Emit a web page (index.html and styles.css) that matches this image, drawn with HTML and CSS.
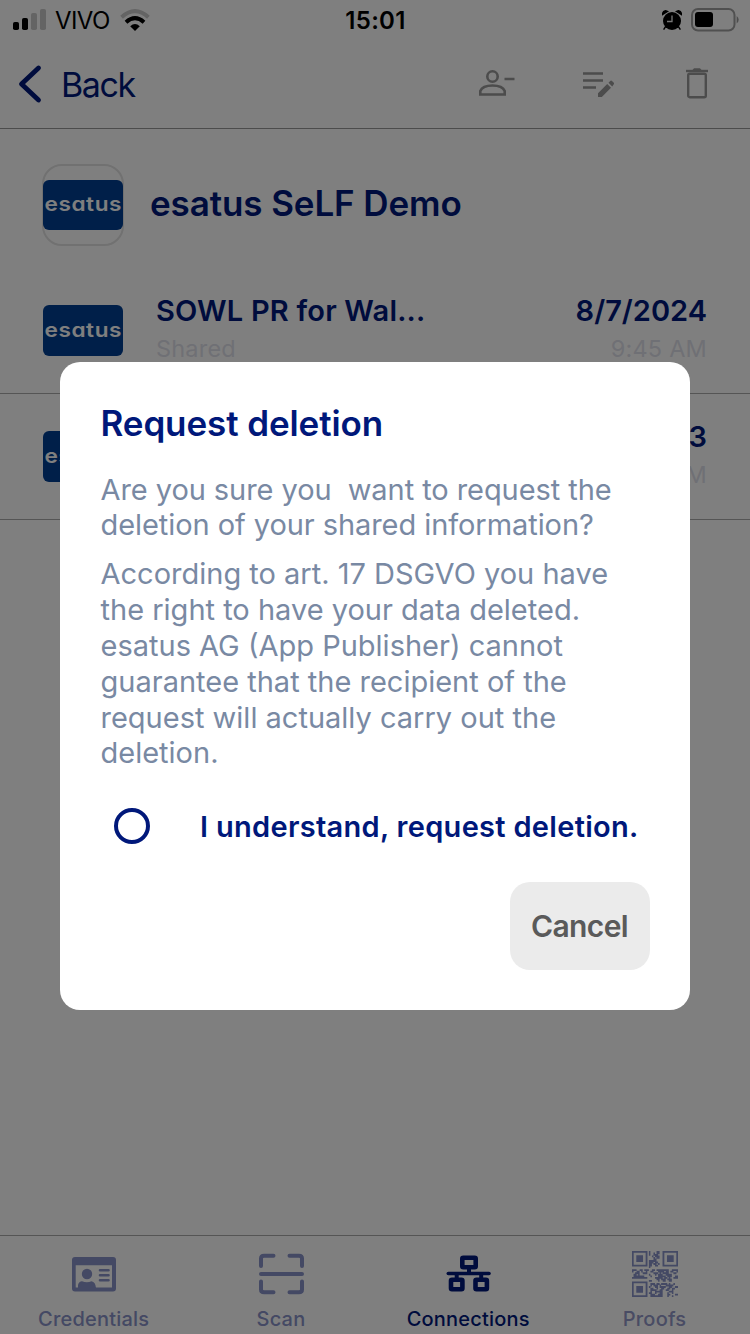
FILE: index.html
```html
<!DOCTYPE html>
<html lang="en">
<head>
<meta charset="utf-8">
<title>esatus Wallet</title>
<link rel="stylesheet" href="styles.css">
</head>
<body>
<div class="screen">
  <header class="status">
    <div class="status-left">
      <svg class="signal" width="34" height="22" viewBox="0 0 34 22"><rect x="0" y="13" width="6" height="8" rx="1.8"/><rect x="9" y="9" width="6" height="12" rx="1.8"/><g fill="#c8c8c8"><rect x="18" y="4" width="6" height="17" rx="1.8"/><rect x="27" y="0" width="6" height="21" rx="1.8"/></g></svg>
      <span class="carrier">VIVO</span>
      <svg class="wifi" width="30" height="22" viewBox="0 0 30 22" fill="none" stroke-width="4"><path d="M1.6 8.2Q15-4 28.400 8.200" stroke="#c8c8c8"/><path d="M6 13.200Q15 5.200 24 13.200" stroke="#000"/><path d="M10.200 17.300Q15 12.800 19.800 17.300L15 22Z" fill="#000"/></svg>
    </div>
    <span class="clock">15:01</span>
    <div class="status-right">
      <svg width="20" height="21" viewBox="0 0 20 21"><circle cx="10" cy="11" r="9"/><path d="M0.600 4.500Q.5 1 3.500.7L5.500 1.500ZM19.400 4.500Q19.500 1 16.500.7L14.500 1.500ZM4 16L1.600 19.700M16 16L18.400 19.700" stroke="#000" stroke-width="1.400"/><path d="M10 5.500V11.500H5" fill="none" stroke="#eee" stroke-width="1.300"/></svg>
      <svg width="48" height="24" viewBox="0 0 48 24"><rect x="1" y="1" width="42.500" height="21.500" rx="6" fill="none" stroke="#a0a0a0" stroke-width="2"/><rect x="4" y="4" width="18" height="15" rx="3"/><path d="M45.700 8Q49.700 11.500 45.700 15.500Z" fill="#999"/></svg>
    </div>
  </header>

  <nav class="nav">
    <svg width="24" height="40" viewBox="0 0 24 40" fill="none" stroke="#00187a" stroke-width="4.800" stroke-linecap="round" stroke-linejoin="round"><path d="M20.500 4L3.500 20L20.500 36"/></svg>
    <span class="back">Back</span>
    <div class="tools">
      <svg width="38" height="30" viewBox="0 0 38 30" fill="none" stroke="#989898" stroke-width="2.600"><circle cx="14.500" cy="8.500" r="5.200"/><path d="M2.300 26.500V23Q4.500 17.500 14.500 17.500T26.700 23V26.500ZM26.500 11H36.500"/></svg>
      <svg width="34" height="30" viewBox="0 0 34 30" fill="none" stroke="#989898" stroke-width="2.600"><path d="M1 5.500H21M1 12.500H21M1 19.500H14"/><path d="M16 29V25.200L25.200 16L29 19.800L19.800 29ZM26.500 14.700L28.500 12.800Q29.200 12.200 30 12.900L31.800 14.800Q32.400 15.600 31.800 16.300L30.200 18.500Z" fill="#989898" stroke="none"/></svg>
      <svg class="trash" width="24" height="32" viewBox="0 0 24 32" fill="none" stroke="#989898" stroke-width="2.400"><rect x="3.200" y="6.700" width="17.600" height="23.500" rx="1.500"/><path d="M1 4H23"/><path d="M7.500 3L9 1.200H15L16.500 3Z" fill="#989898" stroke="none"/></svg>
    </div>
  </nav>

  <section class="profile">
    <div class="avatar"><div class="logo"><span>esatus</span></div></div>
    <h1>esatus SeLF Demo</h1>
  </section>

  <main class="list">
    <article class="row">
      <div class="logo"><span>esatus</span></div>
      <div class="info"><b>SOWL PR for Wal...</b><small>Shared</small></div>
      <div class="date"><b>8/7/2024</b><small>9:45 AM</small></div>
    </article>
    <article class="row">
      <div class="logo"><span>esatus</span></div>
      <div class="info"></div>
      <div class="date"><b>3</b><small>M</small></div>
    </article>
  </main>

  <footer class="tabs">
    <div class="tab">
      <svg width="46" height="48" viewBox="0 0 46 48" fill="#8892c8"><path fill-rule="evenodd" d="M4 7H42Q45 7 45 10V38.500Q45 41.500 42 41.500H4Q1 41.500 1 38.500V10Q1 7 4 7ZM4.700 15.200V37.500H41V15.200Z"/><circle cx="16" cy="24" r="5.200"/><path d="M7 38V35Q8 31.300 11 31.300Q16 33 20.500 31.300Q24.500 32 25 38Z"/><path d="M29 20.200H37.500M29 25.200H37.500M29 30.300H37.500" stroke="#8892c8" stroke-width="2.600" stroke-linecap="round"/></svg>
      <span>Credentials</span>
    </div>
    <div class="tab">
      <svg width="46" height="48" viewBox="0 0 46 48" fill="none" stroke="#8892c8" stroke-width="4" stroke-linecap="round"><path d="M3 16V8.500Q3 5.700 6 5.700H15.500M31.500 5.700H41Q44 5.700 44 8.500V16M3 31.500V39.500Q3 42.300 6 42.300H15.500M31.500 42.300H41Q44 42.300 44 39.500V31.500M3 24H44"/></svg>
      <span>Scan</span>
    </div>
    <div class="tab active">
      <svg width="46" height="48" viewBox="0 0 46 48" fill="none" stroke="#00187a" stroke-width="4.600"><rect x="17.300" y="7.800" width="13.400" height="9.400" rx="1"/><rect x="6" y="29.800" width="11.400" height="9.400" rx="1"/><rect x="30.500" y="29.800" width="11.400" height="9.400" rx="1"/><path d="M24 19V23M11.700 24V28M36.200 24V28" stroke-width="4"/><path d="M3.300 23.500H44" stroke-width="3.600" stroke-linecap="round"/></svg>
      <span>Connections</span>
    </div>
    <div class="tab proofs">
      <svg width="46" height="46" viewBox="0 0 30 30" fill="none" stroke="#8892c8" stroke-width="1.200"><path d="M.5.500H9.500V9.500H.5ZM20.500.500H29.500V9.500H20.500ZM.5 20.500H9.500V29.500H.5Z"/><path d="M2.800 2.800H7.200V7.200H2.800ZM22.800 2.800H27.200V7.200H22.800ZM2.800 22.800H7.200V27.200H2.800Z" fill="#8892c8" stroke="none"/><path d="M11 .5h1M16 .5h2M11 1.500h1M14 1.500h1M16 1.500h2M11 2.500h1M14 2.500h3M13 3.500h1M15 3.500h3M14 4.500h1M16 4.500h2M14 5.500h2M11 6.500h5M11 7.500h3M15 7.500h2M11 8.500h2M14 8.500h2M17 8.500h1M11 9.500h2M15 9.500h2M11 10.500h1M0 12.500h3M5 12.500h2M8 12.500h3M13 12.500h2M16 12.500h8M26 12.500h4M0 13.500h1M3 13.500h2M6 13.500h1M9 13.500h1M12 13.500h2M17 13.500h4M22 13.500h2M25 13.500h2M29 13.500h1M2 14.500h3M7 14.500h3M14 14.500h3M18 14.500h1M20 14.500h4M27 14.500h2M1 15.500h2M4 15.500h1M11 15.500h1M15 15.500h1M17 15.500h3M22 15.500h4M1 16.500h7M12 16.500h1M17 16.500h5M23 16.500h3M28 16.500h2M0 17.500h10M15 17.500h5M21 17.500h2M24 17.500h1M27 17.500h3M16 18.500h2M19 18.500h3M23 18.500h3M11 19.500h2M17 19.500h1M20 19.500h2M24 19.500h2M12 21.500h3M16 21.500h2M19 21.500h4M24 21.500h1M27 21.500h1M12 22.500h1M14 22.500h3M18 22.500h1M22 22.500h5M11 23.500h1M15 23.500h2M18 23.500h4M24 23.500h2M28 23.500h2M12 24.500h2M16 24.500h1M19 24.500h2M23 24.500h2M26 24.500h2M12 25.500h4M18 25.500h2M22 25.500h2M26 25.500h1M12 26.500h1M15 26.500h5M24 26.500h3M11 27.500h2M15 27.500h1M18 27.500h2M23 27.500h1M26 27.500h1M12 28.500h3M17 28.500h3M23 28.500h2M28 28.500h2M12 29.500h8M23 29.500h1M26 29.500h1"/></svg>
      <span>Proofs</span>
    </div>
  </footer>

  <div class="overlay">
    <div class="dialog" role="dialog">
      <h2>Request deletion</h2>
      <p class="question">Are you sure you  want to request the
deletion of your shared information?</p>
      <p class="legal">According to art. 17 DSGVO you have
the right to have your data deleted.
esatus AG (App Publisher) cannot
guarantee that the recipient of the
request will actually carry out the
deletion.</p>
      <label class="option"><i class="radio"></i><span>I understand, request deletion.</span></label>
      <button class="cancel">Cancel</button>
    </div>
  </div>
</div>
</body>
</html>
```
FILE: styles.css
```css
* { box-sizing: border-box; margin: 0; padding: 0; }
body { font-family: Inter, "Liberation Sans", sans-serif; background: #fff; color: #00187a; }
svg { display: block; flex: none; }
.screen { position: relative; width: 750px; height: 1334px; overflow: hidden; display: flex; flex-direction: column; white-space: nowrap; }

.status { height: 40px; display: grid; grid-template-columns: 1fr auto 1fr; align-items: center; padding: 0 11px 0 13px; color: #000; font-size: 24px; }
.status-left { display: flex; align-items: center; }
.signal { margin-top: -1px; }
.carrier { margin-left: 8px; width: 65px; letter-spacing: -.6px; line-height: 38px; padding-top: 2px; }
.clock { font-weight: 600; letter-spacing: .3px; line-height: 38px; padding-top: 2px; margin-left: -1px; }
.status-right { display: flex; justify-content: flex-end; align-items: center; gap: 9px; }

.nav { height: 89px; border-bottom: 1px solid #999; display: flex; align-items: center; padding: 0 41px 0 18px; }
.back { margin-left: 19px; font-size: 34px; letter-spacing: -1.400px; }
.tools { margin-left: auto; margin-top: -2px; display: flex; align-items: center; gap: 65.500px; }
.trash { margin-left: 4px; margin-top: -1px; }

.profile { height: 139px; padding: 35px 42px; display: flex; gap: 26px; }
.avatar { width: 82px; height: 82px; border: 2px solid #e2e2e2; border-radius: 20px; display: flex; align-items: center; justify-content: center; }
.avatar .logo { height: 50px; }
.profile h1 { font-size: 35px; font-weight: 600; line-height: 78px; letter-spacing: -.1px; }
.logo { width: 80px; height: 51px; flex: none; border-radius: 6px; background: #003e92; color: #fff; display: flex; align-items: center; justify-content: center; }
.logo span { font-size: 20px; line-height: 46px; font-weight: 600; letter-spacing: .5px; margin: -2px -.5px 0 0; font-feature-settings: "cv11"; transform: scaleX(1.130); }

.row { height: 126px; border-bottom: 1px solid #aaa; padding: 0 43px; display: flex; }
.row .logo { margin-top: 37px; }
.info, .date { display: flex; flex-direction: column; padding-top: 22px; }
.info { margin-left: 33px; flex: 1; }
.info b { letter-spacing: .2px; }
.date { align-items: flex-end; }
.row b { font-size: 29px; line-height: 42px; font-weight: 600; }
.row small { font-size: 23.500px; line-height: 34px; color: #dfe1ea; letter-spacing: .2px; }

.tabs { margin-top: auto; height: 99px; border-top: 1px solid #aaa; display: grid; grid-template-columns: repeat(4, 187.300px); padding-top: 14px; }
.tab { display: flex; flex-direction: column; align-items: center; font-size: 20px; font-weight: 500; line-height: 24px; gap: 9px; color: #8892c8; letter-spacing: .2px; }
.active { color: #00187a; }
.proofs { color: #9298c8; margin-left: -2px; padding-top: 1px; gap: 10px; }

.overlay { position: absolute; inset: 0; background: rgba(0, 0, 0, .5); display: flex; flex-direction: column; padding: 362px 60px 0; }
.dialog { height: 648px; background: #fff; border-radius: 20px; padding: 40px 40px 40px 40.500px; display: flex; flex-direction: column; }
.dialog h2 { font-size: 35px; line-height: 43px; font-weight: 600; letter-spacing: -.1px; }
.dialog p { font-size: 29px; line-height: 35.800px; color: #7989a3; white-space: pre; }
.question { margin-top: 26.500px; letter-spacing: -.07px; }
.legal { margin-top: 13.300px; }
.option { margin-top: 32.700px; display: flex; align-items: center; gap: 50px; padding-left: 13.500px; height: 44px; font-size: 29px; font-weight: 600; letter-spacing: .3px; }
.option span { padding-top: 2px; }
.radio { width: 36px; height: 36px; border: 4px solid #00187a; border-radius: 50%; flex: none; }
.cancel { margin: 34px 0 0 auto; width: 140px; height: 88px; flex: none; border: 0; border-radius: 20px; background: #ebebeb; color: #5a5a5a; font: 600 30px/88px Inter, sans-serif; letter-spacing: -.6px; padding-right: 1px; }
```
